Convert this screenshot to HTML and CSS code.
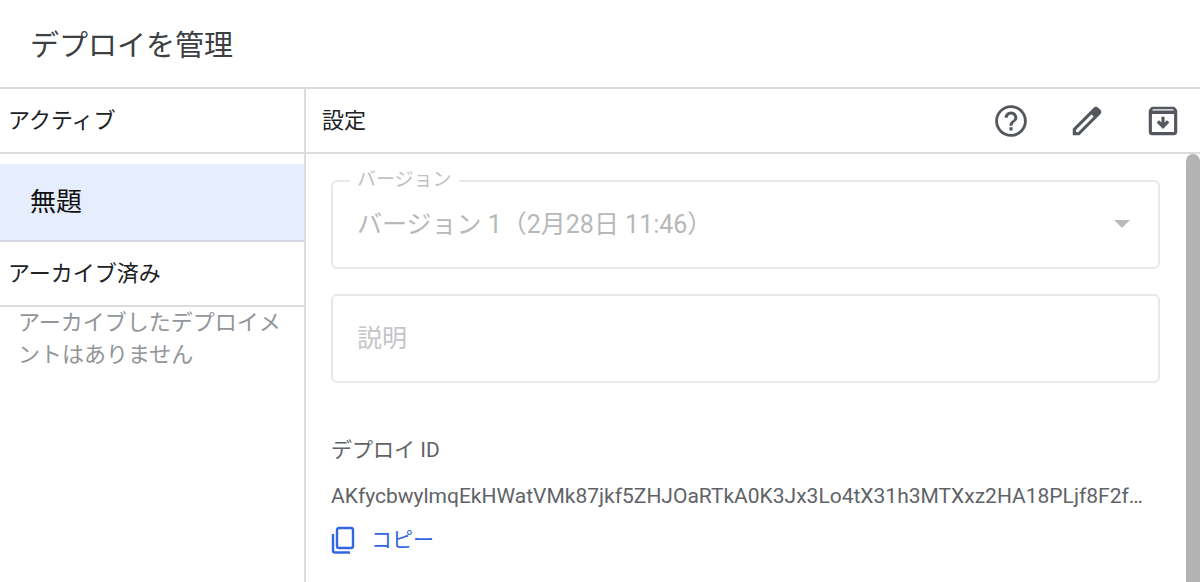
FILE: index.html
```
<!DOCTYPE html>
<html lang="ja">
<head>
    <meta charset="UTF-8">
    <title>デプロイを管理</title>
    <meta name="viewport" content="width=device-width, initial-scale=1.0">
    <link rel="stylesheet" href="styles.css">
</head>
<body>
    <header class="dialog-header">
        <h1 class="dialog-title">デプロイを管理</h1>
    </header>
    <div class="dialog-body">
        <nav class="sidebar">
            <h2 class="section-title">アクティブ</h2>
            <button class="deployment selected" type="button">無題</button>
            <h2 class="section-title">アーカイブ済み</h2>
            <p class="empty-note">アーカイブしたデプロイメントはありません</p>
        </nav>
        <main class="panel">
            <div class="panel-header">
                <h2 class="panel-title">設定</h2>
                <div class="actions">
                    <button class="icon-button" type="button" aria-label="ヘルプ">
                        <svg class="icon" viewBox="0 0 24 24"><path d="M11 18h2v-2h-2v2zm1-16C6.480 2 2 6.480 2 12s4.480 10 10 10 10-4.480 10-10S17.520 2 12 2zm0 18.200c-4.520 0-8.200-3.680-8.200-8.200S7.480 3.800 12 3.800s8.200 3.680 8.200 8.200-3.680 8.200-8.200 8.200zm0-14.200c-2.210 0-4 1.790-4 4h1.900c0-1.200.900-2.100 2.100-2.100s2.100.900 2.100 2.100c0 2-3.050 1.800-3.050 5h1.900c0-2.250 3.050-2.500 3.050-5 0-2.210-1.790-4-4-4z"/></svg>
                    </button>
                    <button class="icon-button" type="button" aria-label="編集">
                        <svg class="icon" viewBox="0 0 24 24"><path d="M20.410 4.940l-1.350-1.350c-.780-.780-2.050-.780-2.830 0L3 16.820V21h4.180L20.410 7.770c.790-.780.790-2.050 0-2.830zm-14 14.120L5 19v-1.360l9.820-9.820 1.410 1.410-9.820 9.830z"/></svg>
                    </button>
                    <button class="icon-button" type="button" aria-label="アーカイブ">
                        <svg class="icon" viewBox="0 0 24 24"><path fill-rule="evenodd" d="M5.500 3h13c.450 0 .850.200 1.130.530l1 1.200c.240.280.370.640.370 1.010V19c0 1.100-.900 2-2 2H5c-1.100 0-2-.900-2-2V5.740c0-.370.130-.730.370-1.010l1-1.200C4.650 3.200 5.050 3 5.500 3zM5.700 4.500l-.700.900h14l-.700-.900H5.700zM5 7.500V19h14V7.500H5z"/><path d="M11 9.300h2v3.700l1.500-1.500 1.500 1.500L12 17l-4-4 1.500-1.500 1.500 1.500z"/></svg>
                    </button>
                </div>
            </div>
            <div class="panel-scroll">
                <div class="panel-content">
                    <div class="field">
                        <label class="field-label" for="version">バージョン</label>
                        <select class="field-control" id="version" disabled>
                            <option>バージョン 1（2月28日 11:46）</option>
                        </select>
                        <svg class="arrow" viewBox="0 0 16 8"><path d="M0 0h16L8 8z"/></svg>
                    </div>
                    <div class="field">
                        <input class="field-control" type="text" placeholder="説明" aria-label="説明" disabled>
                    </div>
                    <h3 class="id-title">デプロイ ID</h3>
                    <p class="id-value">AKfycbwylmqEkHWatVMk87jkf5ZHJOaRTkA0K3Jx3Lo4tX31h3MTXxz2HA18PLjf8F2f…</p>
                    <button class="copy" type="button">
                        <svg class="copy-icon" viewBox="0 0 24 28"><path d="M8 2h12a2 2 0 0 1 2 2v16a2 2 0 0 1-2 2H8a2 2 0 0 1-2-2V4a2 2 0 0 1 2-2zM2 8v16.500a2 2 0 0 0 2 2h15"/></svg>
                        コピー
                    </button>
                </div>
                <div class="scroll-thumb"></div>
            </div>
        </main>
    </div>
</body>
</html>
```
FILE: styles.css
```
* {
    box-sizing: border-box;
}
html, body {
    height: 100%;
    margin: 0;
    overflow: hidden;
}
body {
    display: flex;
    flex-direction: column;
    background-color: #fff;
    color: #202124;
    font-family: Roboto, "Noto Sans CJK JP", sans-serif;
    font-weight: 400;
}
h1, h2, h3, p {
    margin: 0;
    font-weight: inherit;
}
button, input, select {
    font: inherit;
}
button {
    padding: 0;
    border: none;
    background: none;
    cursor: pointer;
}
.dialog-header {
    padding: 26px 30px 21px;
    border-bottom: 2px solid #dadce0;
}
.dialog-title {
    color: #3c4043;
    font-size: 29px;
    line-height: 40px;
}
.dialog-body {
    display: flex;
    flex: 1;
    min-height: 0;
}
.sidebar {
    flex: 0 0 306px;
    border-right: 2px solid #dadce0;
}
.section-title {
    padding: 0 8px;
    border-bottom: 2px solid #dadce0;
    font-size: 22px;
    line-height: 63px;
}
.deployment {
    display: block;
    width: 100%;
    margin-top: 10px;
    padding: 0 30px;
    border-bottom: 2px solid #d3d8e2;
    color: #111;
    font-size: 26px;
    line-height: 76px;
    text-align: left;
}
.selected {
    background-color: #e6edfd;
}
.empty-note {
    padding: 0 18px;
    color: #92959a;
    font-size: 22px;
    line-height: 32px;
}
.panel {
    display: flex;
    flex: 1;
    flex-direction: column;
    min-width: 0;
}
.panel-header {
    display: flex;
    justify-content: space-between;
    align-items: center;
    padding: 0 18px 0 16px;
    border-bottom: 2px solid #dadce0;
}
.panel-title {
    font-size: 22px;
    line-height: 63px;
}
.actions {
    display: flex;
    gap: 38px;
}
.icon-button {
    width: 38px;
    height: 38px;
}
.icon {
    display: block;
    fill: #54585e;
}
.panel-scroll {
    display: flex;
    flex: 1;
    min-height: 0;
}
.panel-content {
    flex: 1;
    min-width: 0;
    padding: 26px 26px 0 25px;
}
.scroll-thumb {
    flex: 0 0 14px;
    border-radius: 7px 7px 0 0;
    background-color: #b3b3b3;
}
.field {
    position: relative;
    margin-bottom: 25px;
}
/* ラベルは枠線の上に重ねる */
.field-label {
    position: absolute;
    top: -13px;
    left: 19px;
    padding: 0 7px;
    background-color: #fff;
    color: #bfc1c3;
    font-size: 19px;
    line-height: 26px;
}
.field-control {
    display: block;
    width: 100%;
    height: 89px;
    padding: 0 24px;
    border: 2px solid #e8e8e8;
    border-radius: 6px;
    background-color: #fff;
    color: #b6b8ba;
    font-size: 25px;
    opacity: 1;
    appearance: none;
}
.field-control::placeholder {
    color: #c4c6c8;
}
.arrow {
    position: absolute;
    top: 40px;
    right: 30px;
    width: 16px;
    height: 8px;
    fill: #b8babc;
}
.id-title {
    padding-top: 24px;
    color: #5f6368;
    font-size: 21px;
    line-height: 36px;
}
.id-value {
    padding: 12px 0;
    overflow: hidden;
    color: #5f6368;
    font-size: 21px;
    line-height: 32px;
    text-overflow: ellipsis;
    white-space: nowrap;
}
.copy {
    display: flex;
    align-items: center;
    gap: 16px;
    color: #3367e0;
    font-size: 21px;
    line-height: 32px;
}
.copy-icon {
    width: 24px;
    height: 28px;
    fill: none;
    stroke: #3367e0;
    stroke-width: 2.4;
}
```
